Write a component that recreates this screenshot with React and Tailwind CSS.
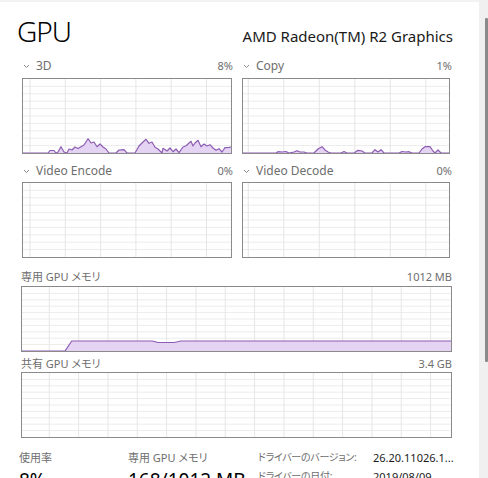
const threeD = [
  [23, 153], [48, 153], [50, 150.5], [54, 150.5], [56, 153], [58, 152], [61, 146.7], [64, 152], [67, 153],
  [69, 149], [72, 150], [75, 147], [78, 148.5], [81, 146.7], [84, 145], [88, 138.7], [91, 143], [94, 142],
  [97, 146.7], [100, 144], [103, 147], [106, 149], [109, 153], [116, 153], [119, 150], [124, 149.7],
  [127, 153], [135, 153], [139, 146], [143, 142], [146, 139.3], [149, 143.3], [152, 142], [155, 147.3],
  [158, 149], [162, 153], [163, 148.3], [167, 151], [170, 148], [173, 151.7], [176, 149], [179, 152.7],
  [183, 147], [186, 145.7], [191, 141.3], [193, 146], [195, 143], [198, 140.3], [201, 146.7], [204, 144],
  [207, 146], [210, 144.7], [213, 148], [216, 150.3], [219, 148.7], [222, 152], [225, 147.7], [229, 147.3],
  [231, 147],
];

const copy = [
  [242, 153], [275, 153], [277, 151.7], [281, 152], [285, 151.5], [288, 153], [293, 152], [296, 150.7],
  [299, 152], [303, 152], [306, 153], [313, 153], [317, 149], [321, 146.7], [324, 150], [327, 152],
  [330, 153], [340, 153], [343, 151.5], [346, 153], [353, 153], [357, 150.3], [361, 151], [364, 153],
  [371, 153], [374, 149.7], [377, 152], [380, 149.7], [383, 153], [398, 153], [401, 151.5], [405, 152],
  [408, 151.7], [411, 153], [418, 153], [421, 149], [424, 146.7], [429, 146.7], [432, 151], [434, 153],
  [437, 150], [440, 153], [448, 153],
];

const dedicated = [
  [22, 351], [65, 351], [71.7, 341], [152, 341], [158, 342.5], [174, 342.5], [181, 341], [451, 341],
];

// svg uses page coordinates so the traced points line up directly
function Chart({ x, y, w, h, vx0, vdx, points, className }) {
  const ix = x + 1;
  const iy = y + 1;
  const iw = w - 2;
  const ih = h - 2;
  const verticals = [];
  for (let vx = vx0; vx < ix + iw; vx += vdx) verticals.push(vx);
  const horizontals = [];
  for (let k = 1; k < 10; k++) horizontals.push(iy + (k * ih) / 10);

  const bottom = iy + ih;
  const line = points ? points.map(([px, py], i) => `${i ? "L" : "M"}${px} ${py}`).join(" ") : null;
  const fill = points ? `${line} L${points[points.length - 1][0]} ${bottom} L${points[0][0]} ${bottom} Z` : null;

  return (
    <div className={`border border-[#8a8a8a] bg-white ${className}`}>
      <svg width={iw} height={ih} viewBox={`${ix} ${iy} ${iw} ${ih}`} className="block">
        {horizontals.map((hy) => (
          <line key={`h${hy}`} x1={ix} x2={ix + iw} y1={hy} y2={hy} stroke="#ececec" strokeWidth="1" />
        ))}
        {verticals.map((vx) => (
          <line key={`v${vx}`} x1={vx} x2={vx} y1={iy} y2={bottom} stroke="#e6e6e6" strokeWidth="1" />
        ))}
        {points && <path d={fill} fill="#e4d3f3" />}
        {points && <path d={line} fill="none" stroke="#8d5db3" strokeWidth="1.2" strokeLinejoin="round" />}
      </svg>
    </div>
  );
}

function Chevron() {
  return (
    <svg width="7" height="5" viewBox="0 0 7 5" className="shrink-0">
      <path d="M1 1 L3.5 3.5 L6 1" fill="none" stroke="#8a8a8a" strokeWidth="1" />
    </svg>
  );
}

function EngineLabel({ name, value, className }) {
  return (
    <div className={`flex h-[12px] items-center justify-between ${className}`}>
      <div className="flex items-center gap-[6px] pl-[1px]">
        <Chevron />
        <span className="text-[12px] leading-[12px] text-[#6e6e6e]">{name}</span>
      </div>
      <span className="text-[11px] leading-[12px] text-[#6e6e6e]">{value}</span>
    </div>
  );
}

export default function App() {
  return (
    <div className="flex h-[478px] w-[488px] overflow-hidden bg-white font-['Noto_Sans','Noto_Sans_CJK_JP',sans-serif] [font-feature-settings:'palt']">
      <main className="w-[479px] shrink-0 border-t-2 border-[#f2f2f2] pl-[17px]">
        <header className="mt-[15px] flex h-[28px] w-[436px] items-baseline justify-between">
          <h1 className="text-[28px] font-light leading-[28px] tracking-[-1px] text-black">GPU</h1>
          <span className="text-[15px] leading-[15px] text-[#1a1a1a]">AMD Radeon(TM) R2 Graphics</span>
        </header>

        <section className="ml-[5px] mt-[15px] flex gap-[9px]">
          <div className="flex w-[211px] flex-col">
            <EngineLabel name="3D" value="8%" />
            <Chart x={22} y={78} w={210} h={76} vx0={30} vdx={35.3} points={threeD} className="mt-[6px] h-[76px] w-[210px]" />
            <EngineLabel name="Video Encode" value="0%" className="mt-[11px]" />
            <Chart x={22} y={182} w={210} h={76} vx0={30} vdx={35.3} className="mt-[5px] h-[76px] w-[210px]" />
          </div>
          <div className="flex w-[210px] flex-col">
            <EngineLabel name="Copy" value="1%" />
            <Chart x={241} y={78} w={208} h={76} vx0={247.3} vdx={35.5} points={copy} className="mt-[6px] h-[76px] w-[208px]" />
            <EngineLabel name="Video Decode" value="0%" className="mt-[11px]" />
            <Chart x={241} y={182} w={208} h={76} vx0={247.3} vdx={35.5} className="mt-[5px] h-[76px] w-[208px]" />
          </div>
        </section>

        <section className="ml-[4px] w-[431px]">
          <div className="mt-[13px] flex h-[11px] items-center justify-between text-[11px] leading-[11px] text-[#6e6e6e]">
            <span>専用 GPU メモリ</span>
            <span>1012 MB</span>
          </div>
          <Chart x={21} y={286} w={431} h={66} vx0={49.3} vdx={29.33} points={dedicated} className="mt-[4px] h-[66px] w-[431px]" />
          <div className="mt-[6px] flex h-[11px] items-center justify-between text-[11px] leading-[11px] text-[#6e6e6e]">
            <span>共有 GPU メモリ</span>
            <span>3.4 GB</span>
          </div>
          <Chart x={21} y={372} w={431} h={66} vx0={49.3} vdx={29.33} className="mt-[3px] h-[66px] w-[431px]" />
        </section>

        <section className="ml-[2px] mt-[14px] grid grid-cols-[109px_130px_115px_1fr] grid-rows-[11px_auto] gap-y-[8px] text-[11px] leading-[11px]">
          <span className="text-[#6e6e6e]">使用率</span>
          <span className="text-[#6e6e6e]">専用 GPU メモリ</span>
          <span className="whitespace-nowrap text-[10px] tracking-[-0.3px] text-[#6e6e6e]">ドライバーのバージョン:</span>
          <span className="whitespace-nowrap text-[#1a1a1a]">26.20.11026.1...</span>
          <span className="text-[19px] leading-[19px] text-black">8%</span>
          <span className="whitespace-nowrap text-[19px] leading-[19px] text-black">168/1012 MB</span>
          <span className="whitespace-nowrap text-[10px] tracking-[-0.3px] text-[#6e6e6e]">ドライバーの日付:</span>
          <span className="text-[#1a1a1a]">2019/08/09</span>
        </section>
      </main>

      <aside className="w-[9px] shrink-0 bg-[#f0f0f0] pt-[18px]">
        <div className="ml-[6px] h-[344px] w-[3px] rounded-[1px] bg-[#8a8a8a]" />
      </aside>
    </div>
  );
}
